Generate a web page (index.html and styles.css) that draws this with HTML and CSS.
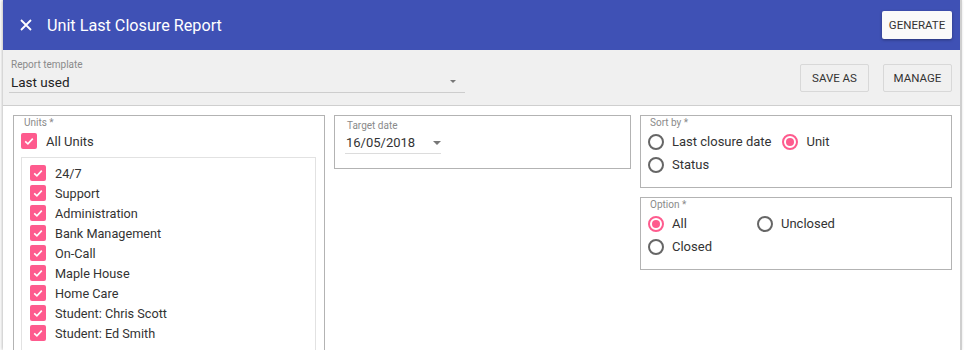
FILE: index.html
```html
<!DOCTYPE html>
<html lang="en">
<head>
  <meta charset="UTF-8" />
  <meta name="viewport" content="width=device-width, initial-scale=1.0"/>
  <title>Unit Last Closure Report</title>
  <link rel="stylesheet" href="styles.css">
</head>
<body>
  <div class="dialog">
    <header class="header">
      <button class="close" aria-label="Close">
        <svg width="12" height="12" viewBox="0 0 12 12"><path d="M1 1L11 11M11 1L1 11" stroke="#fff" stroke-width="1.8" fill="none"/></svg>
      </button>
      <h1 class="title">Unit Last Closure Report</h1>
      <button class="btn-raised">GENERATE</button>
    </header>

    <div class="toolbar">
      <div class="select-field template">
        <div class="field-label">Report template</div>
        <div class="field-value">Last used <span class="arrow small"></span></div>
      </div>
      <div class="toolbar-actions">
        <button class="btn-outline">SAVE AS</button>
        <button class="btn-outline">MANAGE</button>
      </div>
    </div>

    <div class="content">
      <div class="box units">
        <div class="box-label">Units *</div>
        <label class="check-row all">
          <span class="checkbox"><svg width="16" height="16" viewBox="0 0 16 16"><path d="M4.2 8.3L6.9 10.8L11.8 5.6" stroke="#fff" stroke-width="1.6" fill="none"/></svg></span>
          All Units
        </label>
        <div class="unit-list"></div>
      </div>

      <div class="box date">
        <div class="box-label">Target date</div>
        <div class="date-field">16/05/2018 <span class="arrow"></span></div>
      </div>

      <div class="side">
        <div class="box radios">
          <div class="box-label">Sort by *</div>
          <div class="radio-row">
            <label class="radio"><span class="circle"></span>Last closure date</label>
            <label class="radio"><span class="circle on"></span>Unit</label>
          </div>
          <div class="radio-row">
            <label class="radio"><span class="circle"></span>Status</label>
          </div>
        </div>
        <div class="box radios">
          <div class="box-label">Option *</div>
          <div class="radio-row">
            <label class="radio"><span class="circle on"></span>All</label>
            <label class="radio"><span class="circle"></span>Unclosed</label>
          </div>
          <div class="radio-row">
            <label class="radio"><span class="circle"></span>Closed</label>
          </div>
        </div>
      </div>
    </div>
  </div>

  <script>
    const units = ['24/7', 'Support', 'Administration', 'Bank Management', 'On-Call',
      'Maple House', 'Home Care', 'Student: Chris Scott', 'Student: Ed Smith'];
    const tick = '<span class="checkbox"><svg width="16" height="16" viewBox="0 0 16 16"><path d="M4.2 8.3L6.9 10.8L11.8 5.6" stroke="#fff" stroke-width="1.6" fill="none"/></svg></span>';
    const list = document.querySelector('.unit-list');
    units.forEach(name => {
      const row = document.createElement('label');
      row.className = 'check-row';
      row.innerHTML = `${tick}${name}`;
      list.appendChild(row);
    });
  </script>
</body>
</html>
```

FILE: styles.css
```css
body {
  font-family: Roboto, "Liberation Sans", sans-serif;
  background-color: white;
  margin: 0;
  color: #333;
  overflow: hidden;
}

.dialog {
  margin-left: 3px;
  width: 957px;
  height: 350px;
  border-right: 2px solid #cfcfcf;
  box-shadow: -1px 0 3px rgba(0, 0, 0, 0.25);
  background: white;
}

.header {
  height: 50px;
  background-color: #3f51b5;
  display: flex;
  align-items: center;
  padding: 0 8px 0 17px;
}

.close {
  background: none;
  border: 0;
  padding: 0;
  width: 12px;
  height: 12px;
  display: flex;
}

.title {
  flex: 1;
  margin: 0 0 0 15px;
  font-size: 16.2px;
  font-weight: 400;
  color: white;
}

.btn-raised {
  width: 70px;
  height: 28px;
  border: 0;
  border-radius: 2px;
  background: #fafafa;
  box-shadow: 0 1px 3px rgba(0, 0, 0, 0.35);
  font-family: inherit;
  font-size: 11.5px;
  color: #333;
  padding: 0;
}

.toolbar {
  height: 55px;
  background-color: #f0f0f0;
  border-bottom: 1px solid #cfcfcf;
  display: flex;
  justify-content: space-between;
  align-items: center;
  padding: 0 8px 0 6px;
}

.select-field {
  align-self: flex-start;
  padding-top: 8px;
}

.template {
  width: 456px;
}

.field-label, .box-label {
  font-size: 10px;
  line-height: 14px;
  color: #8a8a8a;
  padding-left: 2px;
}

.field-value {
  position: relative;
  font-size: 13.5px;
  line-height: 20px;
  color: #222;
  padding-left: 2px;
  border-bottom: 1px solid #cdcdcd;
}

.arrow {
  position: absolute;
  right: 8px;
  top: 8px;
  border-left: 4px solid transparent;
  border-right: 4px solid transparent;
  border-top: 4px solid #777;
}

.arrow.small {
  border-width: 3px 3px 0;
  right: 9px;
  top: 8px;
}

.toolbar-actions {
  display: flex;
  gap: 14px;
}

.btn-outline {
  width: 69px;
  height: 28px;
  background: transparent;
  border: 1px solid #d8d8d8;
  border-radius: 2px;
  font-family: inherit;
  font-size: 11.5px;
  color: #333;
  padding: 0;
}

.content {
  display: grid;
  grid-template-columns: 312px 297px 312px;
  gap: 9px;
  align-items: start;
  padding: 9px 0 0 10px;
}

.box {
  border: 1px solid #b3b3b3;
}

.units {
  padding: 0 8px 8px 7px;
}

.units .box-label {
  padding-left: 3px;
}

.check-row {
  display: flex;
  align-items: center;
  gap: 9px;
  height: 20px;
  font-size: 12.7px;
  color: #333;
}

.check-row.all {
  height: 22px;
  font-size: 13px;
}

.checkbox {
  width: 16px;
  height: 16px;
  border-radius: 2px;
  background-color: #fe5b8e;
  display: flex;
}

.unit-list {
  margin-top: 5px;
  border: 1px solid #e2e2e2;
  padding: 5px 8px 20px;
}

.date {
  padding: 3px 10px 14px;
}

.date-field {
  position: relative;
  width: 95px;
  font-size: 13px;
  line-height: 20px;
  padding-left: 1px;
  border-bottom: 1px solid #dcdcdc;
}

.date-field .arrow {
  right: 0;
}

.side {
  display: flex;
  flex-direction: column;
  gap: 9px;
}

.radios {
  padding: 0 7px 11px;
}

.radios .box-label {
  padding-left: 2px;
}

.radio-row {
  display: flex;
  height: 23px;
  align-items: center;
}

.radio {
  display: flex;
  align-items: center;
  gap: 8px;
  min-width: 98px;
  margin-right: 11px;
  font-size: 13px;
  color: #333;
}

.circle {
  box-sizing: border-box;
  width: 16px;
  height: 16px;
  border: 2px solid #666;
  border-radius: 50%;
  display: flex;
  align-items: center;
  justify-content: center;
}

.circle.on {
  border-color: #fe5b8e;
}

.circle.on::after {
  content: "";
  width: 8px;
  height: 8px;
  border-radius: 50%;
  background-color: #fe5b8e;
}
```
